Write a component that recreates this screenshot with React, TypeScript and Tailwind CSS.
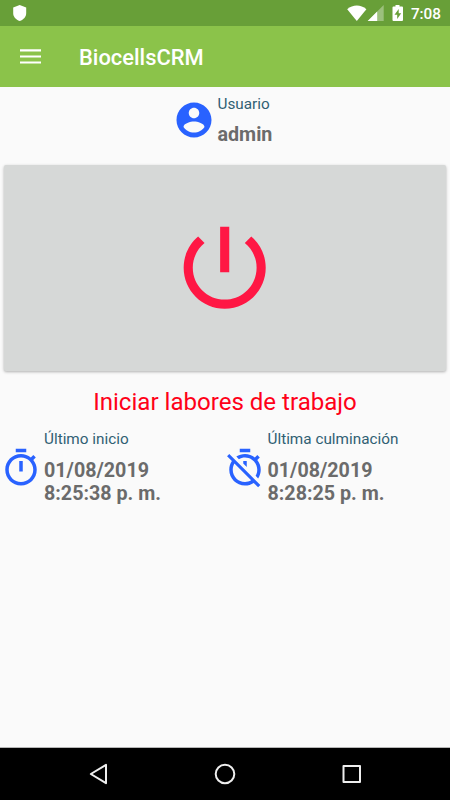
import React from 'react';

const ACCOUNT = 'M12 2C6.48 2 2 6.48 2 12s4.48 10 10 10 10-4.48 10-10S17.52 2 12 2zm0 3c1.66 0 3 1.34 3 3s-1.34 3-3 3-3-1.34-3-3 1.34-3 3-3zm0 14.2c-2.5 0-4.71-1.28-6-3.22.03-1.99 4-3.08 6-3.08 1.99 0 5.97 1.09 6 3.08-1.29 1.94-3.5 3.22-6 3.22z';
const TIMER = 'M15 1H9v2h6V1zm-4 13h2V8h-2v6zm8.03-6.61l1.42-1.42c-.43-.51-.9-.99-1.41-1.41l-1.42 1.42C16.07 4.74 14.12 4 12 4c-4.97 0-9 4.03-9 9s4.02 9 9 9 9-4.03 9-9c0-2.12-.74-4.07-1.97-5.61zM12 20c-3.87 0-7-3.13-7-7s3.13-7 7-7 7 3.13 7 7-3.13 7-7 7z';
const TIMER_OFF = 'M19.04 4.55l-1.42 1.42C16.07 4.74 14.12 4 12 4c-1.83 0-3.53.55-4.95 1.48l1.46 1.46C9.53 6.35 10.73 6 12 6c3.87 0 7 3.13 7 7 0 1.27-.35 2.47-.94 3.49l1.45 1.45C20.45 16.53 21 14.83 21 13c0-2.12-.74-4.07-1.97-5.61l1.42-1.42-1.41-1.42zM15 1H9v2h6V1zm-4 8.44l2 2V8h-2v1.44zM3.02 4L1.75 5.27 4.5 8.03C3.55 9.45 3 11.16 3 13c0 4.97 4.02 9 9 9 1.84 0 3.55-.55 4.98-1.5l2.5 2.5 1.27-1.27-7.71-7.71L3.02 4zM12 20c-3.87 0-7-3.13-7-7 0-1.28.35-2.48.95-3.52l9.56 9.56c-1.03.61-2.23.96-3.51.96z';
const POWER = 'M13 3h-2v10h2V3zm4.83 2.17l-1.42 1.42C17.99 7.86 19 9.81 19 12c0 3.87-3.13 7-7 7s-7-3.13-7-7c0-2.19 1.01-4.14 2.58-5.42L6.17 5.17C4.23 6.82 3 9.26 3 12c0 4.97 4.03 9 9 9s9-4.03 9-9c0-2.74-1.23-5.18-3.17-6.83z';

function Icon({ d, className }: { d: string; className: string }) {
  return (
    <svg viewBox="0 0 24 24" fill="currentColor" className={`shrink-0 ${className}`}>
      <path d={d} />
    </svg>
  );
}

function StatusBar() {
  return (
    <div className="flex h-[26px] items-center bg-[#689f38] pr-[9px] pl-[13px] text-white">
      <svg viewBox="0 0 14 16" className="h-4 w-3.5" fill="currentColor">
        <path d="M6.700 0L13.200 2.600V8C13.200 11.800 10.700 14.600 6.700 16C2.700 14.600 .2 11.800 .2 8V2.600Z" />
      </svg>
      <svg viewBox="0 0 58 18" className="ml-auto h-[18px] w-[58px]" fill="currentColor">
        <path d="M0.200 5.200C5.800 .3 13.800 .3 19.400 5.200L9.800 17Z" />
        <path d="M36.700 1V17H20.700Z" opacity=".35" />
        <path d="M30.200 7.500V17H20.700Z" />
        <path fillRule="evenodd" d="M48.500 1h4v1.500h2.500a1 1 0 0 1 1 1V16a1 1 0 0 1-1 1h-8.500a1 1 0 0 1-1-1V3.500a1 1 0 0 1 1-1h2zM51.700 5L47.500 10.700h2.700V15l4-5.700h-2.500z" />
      </svg>
      <span className="ml-[6px] pt-px text-[15.300px] leading-[18px] font-medium">7:08</span>
    </div>
  );
}

function Session({ icon, label, time }: { icon: string; label: string; time: string }) {
  return (
    <div className="flex w-[223.500px]">
      <Icon d={icon} className="mt-[16.500px] size-[42px] text-[#2962ff]" />
      <div className="ml-[2px] whitespace-nowrap">
        <div className="text-[15.315px] leading-[18px] text-[#306073]">{label}</div>
        <div className="mt-[11px] text-[19.700px] leading-[23px] font-bold text-[#6b6b6b]">
          01/08/2019
          <br />
          {time}
        </div>
      </div>
    </div>
  );
}

export default function App() {
  return (
    <div className="flex h-[800px] w-[450px] flex-col overflow-hidden bg-[#fafafa] font-['Roboto',sans-serif]">
      <StatusBar />
      <header className="flex h-[61px] items-center bg-[#8bc34a] pl-5 text-white">
        <svg viewBox="0 0 21 15" className="h-[15px] w-[21px]" fill="currentColor">
          <path d="M0 .3h21v2.100H0zM0 6.400h21v2.100H0zM0 12.500h21v2.100H0z" />
        </svg>
        <h1 className="ml-[38px] pt-[2px] text-[21.900px] leading-[26px] font-medium">BiocellsCRM</h1>
      </header>
      <main className="flex flex-1 flex-col">
        <section className="flex h-[78px] pl-[172.800px]">
          <Icon d={ACCOUNT} className="mt-[12.300px] size-[42px] text-[#2962ff]" />
          <div className="ml-[2.700px] pt-[8px]">
            <div className="text-[15.315px] leading-[18px] text-[#306073]">Usuario</div>
            <div className="mt-[10px] text-[19.700px] leading-[23px] font-bold text-[#6b6b6b]">admin</div>
          </div>
        </section>
        <button className="mx-1 flex h-[206px] items-center justify-center rounded-[2px] bg-[#d6d8d7] text-[#ff1744] shadow-[0_1px_3px_rgba(0,0,0,0.3)]">
          <Icon d={POWER} className="size-[109.400px]" />
        </button>
        <p className="mt-[16px] text-center text-[24.070px] leading-[30px] text-[#ff0018]">Iniciar labores de trabajo</p>
        <section className="mt-[13px] flex">
          <Session icon={TIMER} label="Último inicio" time="8:25:38 p. m." />
          <Session icon={TIMER_OFF} label="Última culminación" time="8:28:25 p. m." />
        </section>
      </main>
      <nav className="flex h-[53px] items-center justify-between border-t border-[#b5b5b5] bg-black pr-[88px] pl-[88px]">
        <svg viewBox="0 0 20 22" className="h-[22px] w-5" fill="none" stroke="#eee" strokeWidth="2" strokeLinejoin="round">
          <path d="M18 1.800v18.400L2.800 11z" />
        </svg>
        <svg viewBox="0 0 22 22" className="h-[22px] w-[22px]" fill="none" stroke="#eee" strokeWidth="2">
          <circle cx="11" cy="11" r="9.300" />
        </svg>
        <svg viewBox="0 0 20 20" className="size-5" fill="none" stroke="#eee" strokeWidth="2" strokeLinejoin="round">
          <path d="M1.500 2h16.500v16H1.500z" />
        </svg>
      </nav>
    </div>
  );
}
